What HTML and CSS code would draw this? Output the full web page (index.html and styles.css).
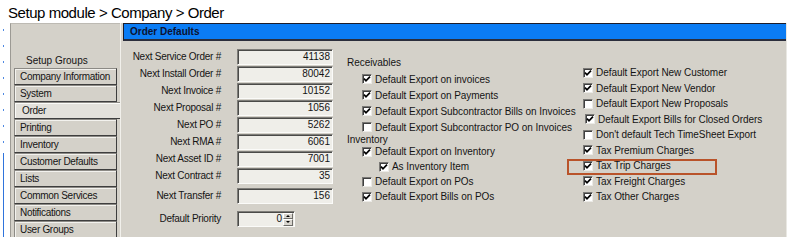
FILE: index.html
```
<!DOCTYPE html>
<html lang="en">
<head>
    <meta charset="UTF-8">
    <title>Setup module - Order</title>
    <link rel="stylesheet" href="styles.css">
</head>
<body>
    <div class="crumb">Setup module &gt; Company &gt; Order</div>
    <div class="window">
        <div class="edge"></div>
        <div class="sidebar">
            <div class="group-title">Setup Groups</div>
            <div class="tab">Company Information</div>
            <div class="tab">System</div>
            <div class="tab active">Order</div>
            <div class="tab">Printing</div>
            <div class="tab">Inventory</div>
            <div class="tab">Customer Defaults</div>
            <div class="tab">Lists</div>
            <div class="tab">Common Services</div>
            <div class="tab">Notifications</div>
            <div class="tab">User Groups</div>
        </div>
        <div class="main">
            <div class="caption">Order Defaults</div>
            <div class="content">
                <div class="numbers">
                    <div class="num-row"><label>Next Service Order #</label><input class="field" type="text" value="41138"></div>
                    <div class="num-row"><label>Next Install Order #</label><input class="field" type="text" value="80042"></div>
                    <div class="num-row"><label>Next Invoice #</label><input class="field" type="text" value="10152"></div>
                    <div class="num-row"><label>Next Proposal #</label><input class="field" type="text" value="1056"></div>
                    <div class="num-row"><label>Next PO #</label><input class="field" type="text" value="5262"></div>
                    <div class="num-row"><label>Next RMA #</label><input class="field" type="text" value="6061"></div>
                    <div class="num-row"><label>Next Asset ID #</label><input class="field" type="text" value="7001"></div>
                    <div class="num-row"><label>Next Contract #</label><input class="field" type="text" value="35"></div>
                    <div class="num-row transfer"><label>Next Transfer #</label><input class="field" type="text" value="156"></div>
                    <div class="num-row priority">
                        <label>Default Priority</label>
                        <div class="field spin-field">
                            <span class="spin-value">0</span>
                            <span class="spinner"><span class="up"></span><span class="down"></span></span>
                        </div>
                    </div>
                </div>

                <div class="checks mid">
                    <div class="section">Receivables</div>
                    <div class="check"><span class="box on"><svg viewBox="0 0 8 8"><polyline points="1,3.6 3,5.8 7,1.6"/></svg></span>Default Export on invoices</div>
                    <div class="check"><span class="box on"><svg viewBox="0 0 8 8"><polyline points="1,3.6 3,5.8 7,1.6"/></svg></span>Default Export on Payments</div>
                    <div class="check"><span class="box on"><svg viewBox="0 0 8 8"><polyline points="1,3.6 3,5.8 7,1.6"/></svg></span>Default Export Subcontractor Bills on Invoices</div>
                    <div class="check"><span class="box"></span>Default Export Subcontractor PO on Invoices</div>
                    <div class="section small">Inventory</div>
                    <div class="check tight"><span class="box on"><svg viewBox="0 0 8 8"><polyline points="1,3.6 3,5.8 7,1.6"/></svg></span>Default Export on Inventory</div>
                    <div class="check tight sub"><span class="box on"><svg viewBox="0 0 8 8"><polyline points="1,3.6 3,5.8 7,1.6"/></svg></span>As Inventory Item</div>
                    <div class="check tight"><span class="box"></span>Default Export on POs</div>
                    <div class="check tight"><span class="box on"><svg viewBox="0 0 8 8"><polyline points="1,3.6 3,5.8 7,1.6"/></svg></span>Default Export Bills on POs</div>
                </div>

                <div class="checks side">
                    <div class="check"><span class="box on"><svg viewBox="0 0 8 8"><polyline points="1,3.6 3,5.8 7,1.6"/></svg></span>Default Export New Customer</div>
                    <div class="check"><span class="box on"><svg viewBox="0 0 8 8"><polyline points="1,3.6 3,5.8 7,1.6"/></svg></span>Default Export New Vendor</div>
                    <div class="check"><span class="box"></span>Default Export New Proposals</div>
                    <div class="check nudge"><span class="box on"><svg viewBox="0 0 8 8"><polyline points="1,3.6 3,5.8 7,1.6"/></svg></span>Default Export Bills for Closed Orders</div>
                    <div class="check"><span class="box"></span>Don't default Tech TimeSheet Export</div>
                    <div class="check"><span class="box on"><svg viewBox="0 0 8 8"><polyline points="1,3.6 3,5.8 7,1.6"/></svg></span>Tax Premium Charges</div>
                    <div class="check marked"><span class="mark"></span><span class="box on"><svg viewBox="0 0 8 8"><polyline points="1,3.6 3,5.8 7,1.6"/></svg></span>Tax Trip Charges</div>
                    <div class="check"><span class="box on"><svg viewBox="0 0 8 8"><polyline points="1,3.6 3,5.8 7,1.6"/></svg></span>Tax Freight Charges</div>
                    <div class="check"><span class="box on"><svg viewBox="0 0 8 8"><polyline points="1,3.6 3,5.8 7,1.6"/></svg></span>Tax Other Charges</div>
                </div>
            </div>
        </div>
    </div>
</body>
</html>
```

FILE: styles.css
```
body { margin: 0; background: #fff; font-family: "Liberation Sans", Arial, sans-serif; color: #141414; }
.crumb { height: 20px; padding: 3px 0 0 8px; font-size: 15px; line-height: 20px; letter-spacing: -0.45px; color: #000; }

.window { display: flex; width: 787px; height: 214px; }
.edge { width: 1px; margin: 0 6px 0 3px; background: linear-gradient(to bottom, transparent 0 130px, #2f74dc 130px), repeating-linear-gradient(to bottom, transparent 0 6px, #4d88e2 6px 8px, transparent 8px 16px); }

.sidebar { box-sizing: border-box; width: 110px; padding: 30px 3px 0 3px; background: #d4d1c9; border-left: 1px solid #9c9a94; border-top: 1px solid #bdbab3; font-size: 10px; }
.group-title { height: 14px; line-height: 14px; padding-left: 12px; }
.tab { box-sizing: border-box; width: 103px; height: 17px; line-height: 15px; padding-left: 5px; white-space: nowrap; overflow: hidden; letter-spacing: -0.3px; border: 1px solid; border-color: #8c8a85 #3e3e3e #3e3e3e #8c8a85; box-shadow: inset 1px 1px #f3f2ee; }
.tab.active { width: 106px; padding-left: 7px; border-right: none; background: #e3e1db; box-shadow: inset 1px 1px #fbfbf8; }

.main { flex: 1; display: flex; flex-direction: column; padding-left: 2px; background: #d4d1c9; border-left: 1px solid #f1f0eb; border-right: 1px solid #e9e8e3; }
.caption { box-sizing: border-box; height: 18px; padding-left: 6px; line-height: 15px; font-size: 10px; font-weight: bold; color: #0c1230; background: #0b7cf4; border-top: 1px solid #1d1d2b; border-left: 1px solid #1d1d2b; border-bottom: 2px solid #2b2e3c; }

.content { display: flex; flex: 1; }
.numbers { width: 210px; padding-top: 7px; font-size: 10px; }
.num-row { display: flex; align-items: center; gap: 16px; height: 17px; }
.num-row label { width: 98px; text-align: right; letter-spacing: -0.25px; white-space: nowrap; }
.num-row.transfer { margin-top: 3px; }
.num-row.priority { margin-top: 6px; }
.field { box-sizing: border-box; width: 96px; height: 16px; margin: 0; padding: 0 2px 0 0; text-align: right; font: 10px "Liberation Sans", Arial, sans-serif; color: #141414; background: #efeee9; border: 1px solid; border-color: #7e7d79 #fbfbf9 #fbfbf9 #7e7d79; box-shadow: inset 1px 1px #4a4a48; outline: none; }
.spin-field { display: flex; align-items: center; width: 58px; padding-right: 1px; }
.spin-value { flex: 1; text-align: right; padding-right: 1px; line-height: 14px; }
.spinner { display: flex; flex-direction: column; width: 10px; height: 13px; margin-top: 1px; }
.spinner span { flex: 1; position: relative; background: #d8d5ce; border: 1px solid; border-color: #fff #6d6c68 #6d6c68 #fff; }
.spinner .up::after, .spinner .down::after { content: ""; position: absolute; left: 2px; top: 1px; border-left: 2px solid transparent; border-right: 2px solid transparent; }
.spinner .up::after { border-bottom: 2px solid #000; }
.spinner .down::after { border-top: 2px solid #000; }

.checks { font-size: 10px; letter-spacing: -0.05px; white-space: nowrap; }
.checks.mid { width: 236px; margin-left: 14px; padding-top: 14px; }
.checks.side { flex: 1; padding-top: 24px; }
.section { height: 16px; line-height: 16px; }
.section.small { height: 9px; line-height: 9px; }
.check { display: flex; align-items: center; gap: 3px; height: 16px; }
.mid .check { padding-left: 15px; }
.mid .check.sub { padding-left: 32px; }
.check.tight { height: 15px; }
.side .check { height: 15.5px; position: relative; }
.side .check.nudge { padding-left: 2px; }
.box { box-sizing: border-box; width: 10px; height: 10px; flex: none; background: #fff; border: 1px solid; border-color: #7a7976 #ecebe7 #ecebe7 #7a7976; box-shadow: inset 1px 1px #3f3f3f; }
.box svg { display: block; width: 8px; height: 8px; }
.box polyline { fill: none; stroke: #000; stroke-width: 1.7; }
.mark { position: absolute; left: -16px; top: 1px; width: 150px; height: 16px; box-sizing: border-box; border: 2px solid #b9532a; }
```
